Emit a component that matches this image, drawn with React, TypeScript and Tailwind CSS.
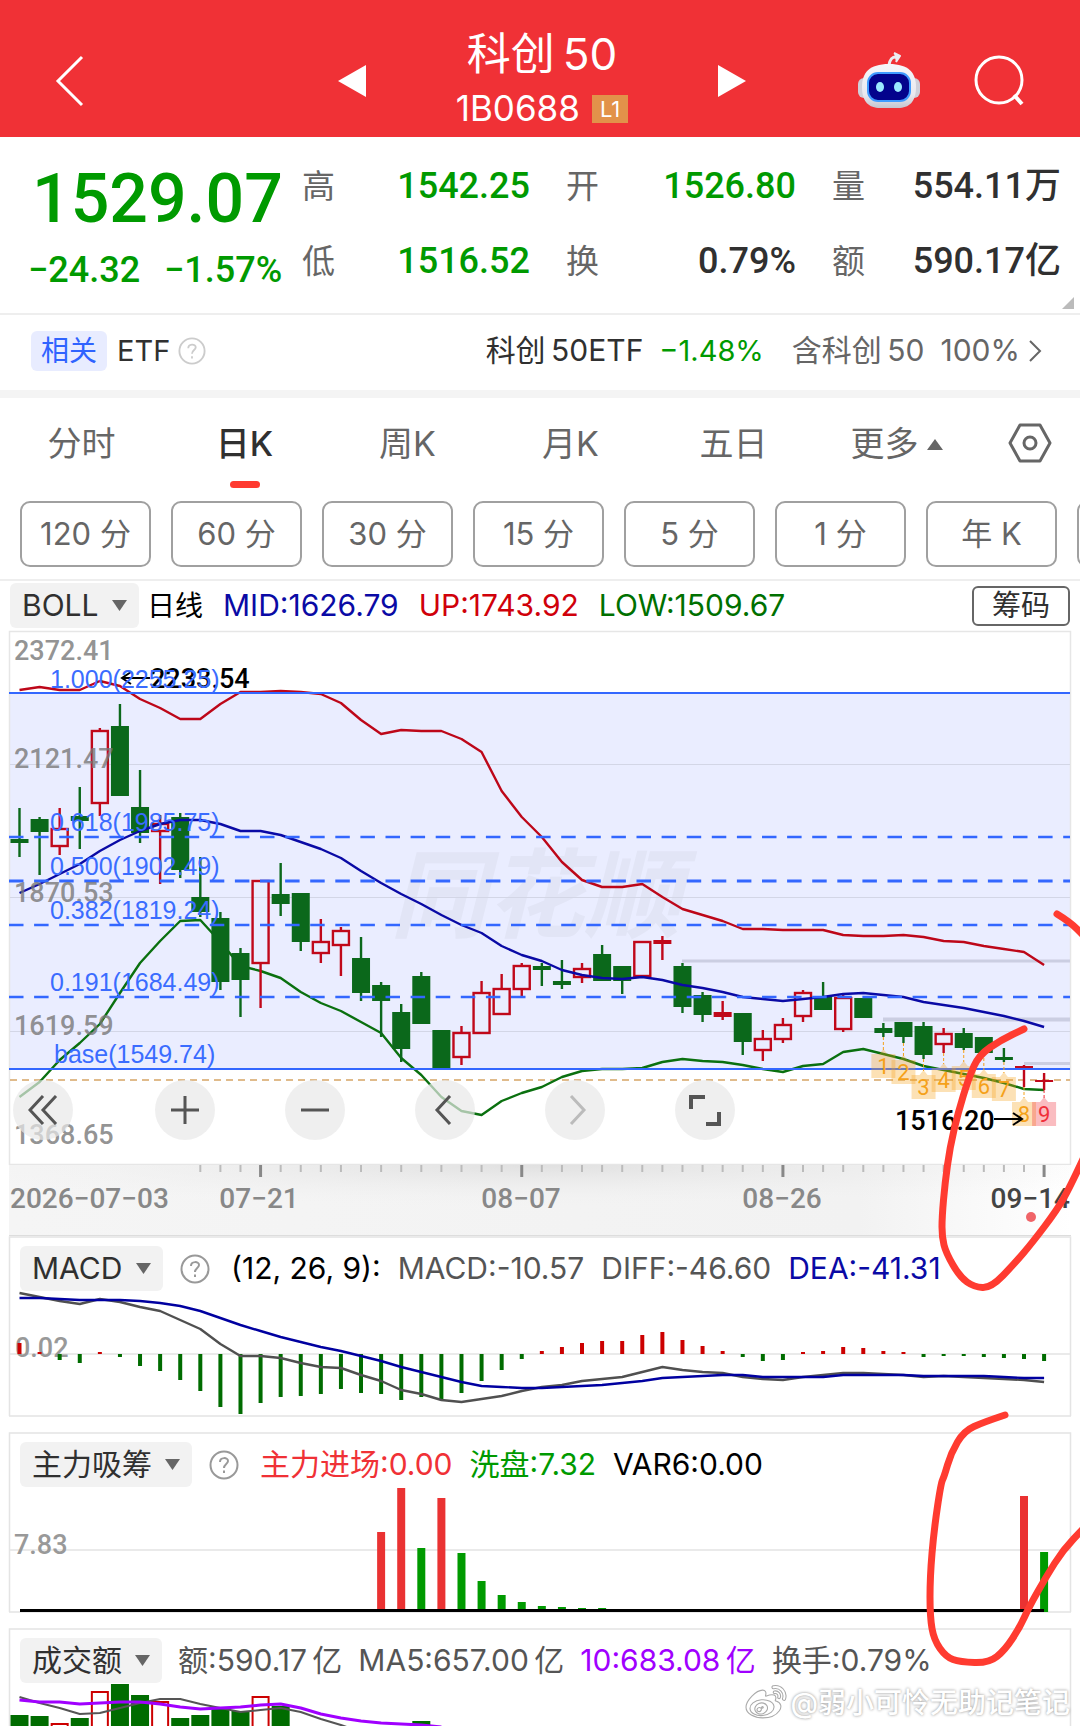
import { FaWeibo } from "react-icons/fa";

const latin = "font-['Inter','Noto_Sans_CJK_SC',sans-serif]";
const digits = "font-['Roboto','Noto_Sans_CJK_SC',sans-serif]";

const x = (i: number) => 19.5 + i * 20.09;
const line = (ys: number[]) => ys.map((y, i) => `${x(i)},${y}`).join(" ");

// direction, high, body top, body bottom, low
type Candle = ["r" | "g", number, number, number, number];

const candles: Candle[] = [
  ["g", 178, 209, 213, 227], ["g", 187, 189, 202, 245], ["r", 178, 198, 217, 225], ["g", 157, 186, 191, 219],
  ["r", 98, 100, 174, 186], ["g", 74, 96, 166, 166], ["g", 140, 177, 203, 213], ["r", 185, 193, 202, 254],
  ["g", 183, 187, 240, 248], ["g", 227, 267, 282, 287], ["g", 282, 288, 352, 360], ["g", 318, 323, 350, 387],
  ["r", 250, 250, 334, 378], ["g", 233, 264, 274, 286], ["g", 263, 263, 312, 321], ["r", 289, 311, 324, 333],
  ["r", 297, 300, 316, 346], ["g", 307, 328, 363, 371], ["g", 352, 355, 371, 407], ["g", 374, 382, 419, 432],
  ["g", 342, 346, 394, 394], ["g", 400, 400, 438, 438], ["r", 396, 402, 428, 435], ["r", 351, 362, 404, 404],
  ["r", 344, 358, 385, 385], ["r", 333, 335, 360, 367], ["g", 333, 336, 340, 356], ["g", 330, 351, 355, 359],
  ["r", 333, 338, 348, 353], ["g", 315, 324, 351, 351], ["g", 336, 336, 351, 364], ["r", 311, 311, 347, 348],
  ["r", 306, 310, 314, 330], ["g", 333, 336, 377, 383], ["g", 362, 365, 385, 392], ["r", 371, 382, 387, 390],
  ["g", 383, 383, 412, 425], ["r", 400, 408, 421, 431], ["r", 388, 394, 410, 413], ["r", 360, 362, 387, 392],
  ["g", 352, 367, 380, 380], ["r", 365, 367, 400, 402], ["g", 368, 368, 388, 388], ["g", 393, 398, 403, 407],
  ["g", 392, 392, 407, 413], ["g", 392, 396, 425, 429], ["r", 398, 403, 415, 423], ["g", 398, 403, 418, 420],
  ["g", 407, 407, 423, 423], ["g", 418, 427, 430, 432], ["r", 435, 436, 440, 457], ["r", 443, 450, 452, 460],
];

const upper = [
  60, 57, 60, 60, 51, 56, 69, 78, 89, 89, 74, 62, 62, 61, 62, 64, 73, 90, 104, 100, 101, 101, 109, 122, 161, 187,
  207, 232, 250, 257, 257, 254, 267, 279, 285, 291, 299, 299, 300, 300, 300, 305, 306, 306, 305, 307, 311, 312, 316,
  319, 322, 335,
];
const middle = [
  263, 254, 244, 234, 221, 210, 201, 194, 190, 190, 194, 201, 201, 205, 212, 219, 228, 241, 253, 264, 274, 285, 295,
  303, 316, 325, 331, 340, 345, 348, 349, 347, 350, 355, 358, 362, 367, 369, 371, 369, 367, 364, 363, 365, 367, 372,
  375, 378, 382, 386, 391, 397,
];
const lower = [
  467, 452, 430, 413, 394, 363, 333, 311, 291, 290, 312, 336, 341, 348, 362, 373, 381, 392, 403, 428, 445, 467, 481,
  485, 471, 463, 457, 447, 441, 439, 439, 438, 432, 429, 431, 432, 435, 439, 442, 436, 434, 422, 419, 424, 429, 436,
  440, 444, 448, 453, 459, 460,
];

const fibs = [
  { label: "1.000(2255.25)", x: 50, y: 58 },
  { label: "0.618(1985.75)", x: 50, y: 201 },
  { label: "0.500(1902.49)", x: 50, y: 245 },
  { label: "0.382(1819.24)", x: 50, y: 289 },
  { label: "0.191(1684.49)", x: 50, y: 361 },
  { label: "base(1549.74)", x: 54, y: 433 },
];

const prices = [
  { label: "2372.41", y: 30 },
  { label: "2121.47", y: 138 },
  { label: "1870.53", y: 272 },
  { label: "1619.59", y: 405 },
  { label: "1368.65", y: 514 },
];

const counts = [424, 430, 445, 438, 436, 444, 447, 472, 472];

const diff = [
  57, 61, 65, 68, 63, 66, 71, 75, 84, 93, 108, 120, 120, 122, 127, 131, 132, 139, 145, 154, 158, 164, 166, 163, 160,
  155, 151, 149, 145, 143, 141, 136, 131, 134, 136, 137, 141, 143, 144, 141, 139, 137, 137, 138, 139, 141, 140, 141,
  142, 143, 144, 146,
];
const dea = [
  62, 62, 63, 64, 64, 64, 65, 67, 70, 75, 82, 89, 95, 101, 106, 111, 115, 120, 125, 131, 136, 141, 146, 150, 151, 152,
  152, 151, 150, 149, 147, 145, 142, 141, 140, 139, 139, 141, 141, 141, 141, 139, 139, 139, 139, 140, 140, 140, 140,
  141, 142, 142,
];
const macd = [
  107, 116, 124, 127, 116, 121, 130, 135, 144, 155, 171, 178, 167, 161, 160, 158, 153, 157, 158, 164, 161, 163, 157,
  145, 134, 123, 115, 111, 107, 105, 105, 99, 96, 104, 110, 115, 121, 125, 124, 116, 115, 111, 112, 115, 116, 121, 120,
  120, 121, 122, 123, 125,
];

const force: [number, "r" | "g", number][] = [
  [18, "r", 100], [19, "r", 56], [20, "g", 116], [21, "r", 66], [22, "g", 121], [23, "g", 149], [24, "g", 163],
  [25, "g", 170], [26, "g", 174], [27, "g", 175], [28, "g", 176], [29, "g", 176], [50, "r", 64], [51, "g", 120],
];

const turnover: [number, "r" | "g", number][] = [
  [0, "g", 87], [1, "g", 88], [2, "r", 95], [3, "g", 90], [4, "r", 63], [5, "g", 56], [6, "g", 67], [7, "r", 73],
  [8, "g", 90], [9, "g", 87], [10, "g", 81], [11, "g", 83], [12, "r", 68], [13, "g", 78], [20, "g", 93],
];
const ma5 = [69, 75, 80, 86, 85, 80, 75, 71, 71, 76, 80, 84, 82, 80, 84, 91, 97, 104];
const ma10 = [72, 74, 74, 76, 75, 74, 74, 76, 79, 81, 80, 79, 77, 76, 80, 86, 90, 93, 95, 96, 97, 99];

function Header() {
  return (
    <header className="flex h-[137px] items-center bg-[#f03136] text-white">
      <button aria-label="返回" className="ml-[54px] mt-6">
        <svg width="32" height="52" viewBox="0 0 32 52" fill="none" stroke="currentColor" strokeWidth="3">
          <path d="M28 2 4 26l24 24" />
        </svg>
      </button>
      <div className="ml-auto flex items-center">
        <button aria-label="上一个" className="mt-6">
          <svg width="28" height="32" viewBox="0 0 28 32" fill="currentColor">
            <path d="M28 0v32L0 16z" />
          </svg>
        </button>
        <div className="flex w-[352px] flex-col items-center pt-7">
          <h1 className="text-[44px] leading-[52px]">科创&thinsp;50</h1>
          <div className="flex items-center gap-3 text-[35px] leading-[57px]">
            1B0688
            <span className="bg-[#e2924a] px-2 text-[22px] leading-7">L1</span>
          </div>
        </div>
        <button aria-label="下一个" className="mt-6">
          <svg width="28" height="32" viewBox="0 0 28 32" fill="currentColor">
            <path d="M0 0v32l28-16z" />
          </svg>
        </button>
      </div>
      <div className="ml-[112px] mr-14 mt-6 flex items-center gap-[54px]">
        <button aria-label="智能助手">
          <svg width="62" height="58" viewBox="0 0 62 58">
            <defs>
              <linearGradient id="shell" x2="0" y2="1">
                <stop offset="0" stopColor="#f6f6fa" />
                <stop offset="0.7" stopColor="#e9e9ef" />
                <stop offset="1" stopColor="#c4c5cf" />
              </linearGradient>
            </defs>
            <path d="M31 13c1-6 3-8 7-8" fill="none" stroke="#ececf2" strokeWidth="3" />
            <path d="m36 1 6 3-4 6" fill="#ececf2" stroke="#ececf2" strokeWidth="2" strokeLinejoin="round" />
            <rect x="0" y="26" width="62" height="20" rx="6" fill="#cfd0da" />
            <path d="M31 12c20 0 27 9 27 23 0 15-7 21-18 21H22C11 56 4 50 4 35 4 21 11 12 31 12z" fill="url(#shell)" />
            <rect x="10" y="21" width="42" height="28" rx="10" fill="#03038c" stroke="#3f9bff" strokeWidth="2" />
            <ellipse cx="22" cy="35" rx="4" ry="5" fill="#9be9ff" />
            <ellipse cx="40" cy="35" rx="4" ry="5" fill="#9be9ff" />
          </svg>
        </button>
        <button aria-label="搜索">
          <svg width="50" height="52" viewBox="0 0 50 52" fill="none" stroke="currentColor" strokeWidth="3">
            <circle cx="25" cy="25" r="23" />
            <path d="m40 40 8 9" strokeWidth="4" />
          </svg>
        </button>
      </div>
    </header>
  );
}

const quotes = [
  { label: "高", value: "1542.25", green: true },
  { label: "开", value: "1526.80", green: true },
  { label: "量", value: "554.11万", green: false },
  { label: "低", value: "1516.52", green: true },
  { label: "换", value: "0.79%", green: false },
  { label: "额", value: "590.17亿", green: false },
];

function Quote() {
  return (
    <section className={`${digits} relative flex h-[178px] border-b-2 border-[#eee] pr-[19px] font-medium`}>
      <div className="w-[302px] pl-7 text-[#009a00]">
        <div className="mt-5 pl-1 text-[68px] leading-[84px]">1529.07</div>
        <div className="flex gap-6 pt-2 text-[36px] leading-[42px]">
          <span>−24.32</span>
          <span>−1.57%</span>
        </div>
      </div>
      <dl className="grid flex-1 grid-cols-[228px_1fr_229px] content-start gap-x-9 pt-3 text-[36px] leading-[75px]">
        {quotes.map((q) => (
          <div key={q.label} className="flex justify-between">
            <dt className="text-[33px] font-normal text-[#666]">{q.label}</dt>
            <dd className={q.green ? "text-[#009a00]" : "text-[#303030]"}>{q.value}</dd>
          </div>
        ))}
      </dl>
      <svg className="absolute right-[6px] bottom-1 text-[#bbb]" width="12" height="12" fill="currentColor">
        <path d="M12 0v12H0z" />
      </svg>
    </section>
  );
}

function Help({ size, className }: { size: number; className: string }) {
  return (
    <button aria-label="说明" className={className}>
      <svg width={size} height={size} viewBox="0 0 30 30" fill="none" stroke="currentColor" strokeWidth="2">
        <circle cx="15" cy="15" r="13.5" />
        <path d="M11 12c0-5 8-5 8-1 0 3-4 3-4 7M15 20.5v2.5" />
      </svg>
    </button>
  );
}

function Related() {
  return (
    <section className="flex h-[83px] items-center border-b-8 border-[#f4f4f4] pr-[38px] pb-1 pl-[31px] text-[30px] text-[#303030]">
      <span className="rounded-md bg-[#e8ecff] px-[10px] text-[28px] leading-10 text-[#2f63ff]">相关</span>
      <span className="ml-[10px] text-[29px]">ETF</span>
      <Help size={28} className="ml-2 text-[#ccc]" />
      <a href="#etf" className="ml-auto flex gap-4">
        <span>科创&thinsp;50ETF</span>
        <span className="text-[29px] leading-[45px] text-[#009a00]">−1.48%</span>
      </a>
      <a href="#holding" className="ml-7 flex items-center gap-4 text-[#666]">
        <span>含科创&thinsp;50</span>
        <span>100%</span>
        <svg className="-ml-2" width="14" height="24" viewBox="0 0 14 24" fill="none" stroke="currentColor" strokeWidth="2">
          <path d="m2 2 10 10L2 22" />
        </svg>
      </a>
    </section>
  );
}

const tabs = ["分时", "日K", "周K", "月K", "五日", "更多"];
const periods = ["120 分", "60 分", "30 分", "15 分", "5 分", "1 分", "年 K"];

function Tabs() {
  return (
    <nav>
      <div className="flex h-[103px] pt-[21px]">
        <div className="grid flex-1 grid-cols-6 items-start">
          {tabs.map((tab) => (
            <button
              key={tab}
              className={
                tab === "日K"
                  ? "flex flex-col items-center text-[34px] leading-[50px] font-medium text-[#303030]"
                  : "flex items-center justify-center gap-2 text-[34px] leading-[50px] text-[#666]"
              }
            >
              {tab}
              {tab === "日K" && <span className="mt-3 h-[7px] w-[30px] rounded-full bg-[#ff3a30]" />}
              {tab === "更多" && (
                <svg width="16" height="11" viewBox="0 0 16 11" fill="#666">
                  <path d="m8 0 8 11H0z" />
                </svg>
              )}
            </button>
          ))}
        </div>
        <button aria-label="设置" className="mr-7 ml-[30px] self-start pt-1 text-[#666]">
          <svg width="44" height="40" viewBox="0 0 44 40" fill="none" stroke="currentColor" strokeWidth="3">
            <path d="M12 2h20l10 18-10 18H12L2 20z" strokeLinejoin="round" />
            <circle cx="22" cy="20" r="6" />
          </svg>
        </button>
      </div>
      <div className="flex h-20 gap-5 overflow-hidden border-b-2 border-[#eee] pl-5">
        {periods.map((p) => (
          <button
            key={p}
            className="h-[66px] w-[131px] shrink-0 rounded-[10px] border-2 border-[#a0a0a0] text-[31px] text-[#666]"
          >
            {p}
          </button>
        ))}
        <button aria-label="更多周期" className="h-[66px] w-[131px] shrink-0 rounded-[10px] border-2 border-[#a0a0a0]" />
      </div>
    </nav>
  );
}

function Picker({ value }: { value: string }) {
  return (
    <label className="relative flex items-center">
      <select
        aria-label="指标"
        className="h-[45px] appearance-none rounded-md bg-[#f2f2f2] pr-10 pl-3 text-[30px] text-[#303030]"
      >
        <option>{value}</option>
      </select>
      <svg className="pointer-events-none absolute right-3" width="15" height="11" viewBox="0 0 15 11" fill="#666">
        <path d="M0 0h15L7.5 11z" />
      </svg>
    </label>
  );
}

function BollBar() {
  return (
    <div className="flex h-[49px] items-center gap-5 px-[10px] text-[30px] text-black">
      <Picker value="BOLL" />
      <span className="-ml-3 text-[28px]">日线</span>
      <span className="text-[#0a0aa5]">MID:1626.79</span>
      <span className="text-[#d0000a]">UP:1743.92</span>
      <span className="text-[#007000]">LOW:1509.67</span>
      <button className="ml-auto h-10 rounded-md border-2 border-[#666] px-[18px] text-[29px] leading-9 text-[#303030]">
        筹码
      </button>
    </div>
  );
}

function KLine() {
  return (
    <svg viewBox="0 0 1080 535" className="block h-auto w-full" role="img">
      <rect x="10" y="63" width="1060" height="376" fill="#eaedff" />
      <text x="390" y="300" fontWeight="bold" fontSize="97" fontStyle="italic" fill="#e2e5f6" className={latin}>
        同花顺
      </text>
      <path d="M9.5 534.5V1.5h1061v533z" fill="none" stroke="#e6e6e6" strokeWidth="1.5" />
      <path d="M10 134.5h1060M10 267.5h1060M10 401.5h1060" stroke="#d3d6e6" />
      <path d="M682 331h388" stroke="#cbcee2" strokeWidth="3" />
      <path d="M883 389.5h187" stroke="#cbcee2" strokeWidth="4" />
      <path d="M1024 433.5h46" stroke="#cbcee2" strokeWidth="3" />
      <path d="M10 450h1060" stroke="#d6a566" strokeWidth="1.5" strokeDasharray="7 5" />
      <polyline points={line(lower)} fill="none" stroke="#0a700f" strokeWidth="2.4" strokeLinejoin="round" />
      {candles.map(([dir, high, top, bottom, low], i) => {
        const color = dir === "r" ? "#c0081a" : "#0b681b";
        const hollow = dir === "r" && bottom - top > 7;
        return (
          <g key={i} stroke={color} strokeWidth="2.4">
            <path d={`M${x(i)} ${high}V${top}M${x(i)} ${bottom}V${low}`} />
            {hollow ? (
              <rect x={x(i) - 8} y={top + 1} width="16" height={bottom - top - 2} fill="none" />
            ) : (
              <rect x={x(i) - 9} y={top} width="18" height={bottom - top} fill={color} stroke="none" />
            )}
          </g>
        );
      })}
      <g fill="none" strokeWidth="2.4" strokeLinejoin="round">
        <polyline points={line(upper)} stroke="#bd0719" />
        <polyline points={line(middle)} stroke="#0a0aa5" />
      </g>
      <g stroke="#3367ff" strokeWidth="2">
        <path d="M9 63h1061M9 439h1061" />
        <path d="M9 207h1061M9 295h1061M9 367h1061" strokeWidth="2.4" strokeDasharray="14.5 10.6" />
        <path d="M9 251h1061" strokeWidth="3" strokeDasharray="14.5 10.6" />
      </g>
      {counts.map((y, n) => {
        const i = n + 43;
        const last = n === 8;
        return (
          <g key={n} fill={last ? "#f0303a" : "#f5a11a"}>
            <path d={`M${x(i)} ${candles[i][4]}V${y - 4}`} stroke={last ? "#f0303a" : "#f5a11a"} strokeDasharray="3 2" />
            <path d={`M${x(i) - 12} ${y}h8l4-5 4 5h8v24h-24z`} opacity="0.32" />
            <text x={x(i)} y={y + 20} textAnchor="middle" fontSize="22" className={digits}>
              {n + 1}
            </text>
          </g>
        );
      })}
      <g fontSize="27" fontWeight="500" fill="#777" fillOpacity="0.8" className={digits}>
        {prices.map((p) => (
          <text key={p.label} x="14" y={p.y}>{p.label}</text>
        ))}
      </g>
      <g fontSize="27" fontWeight="500" className={digits}>
        <text x="150" y="58">2233.54</text>
        <text x="895" y="500">1516.20</text>
        <path d="M150 48h-28m9-6-9 6 9 6M994 489h28m-9-6 9 6-9 6" fill="none" stroke="#000" strokeWidth="2" />
      </g>
      <g fontSize="25" fill="#3a6cff" className="font-['Liberation_Sans',Arial,sans-serif]">
        {fibs.map((f) => (
          <text key={f.label} x={f.x} y={f.y}>{f.label}</text>
        ))}
      </g>
    </svg>
  );
}

const round = "flex size-[60px] items-center justify-center rounded-full bg-[#e8e8e8]/70 text-[#555]";

function ChartTools() {
  return (
    <div className="absolute bottom-[25px] left-[13px] flex gap-[70px]">
      <button aria-label="最早" className={`${round} mr-3`}>
        <svg width="30" height="30" viewBox="0 0 30 30" fill="none" stroke="currentColor" strokeWidth="3">
          <path d="M15 1 2 15l13 14M28 1 15 15l13 14" />
        </svg>
      </button>
      <button aria-label="放大" className={round}>
        <svg width="28" height="28" viewBox="0 0 28 28" stroke="currentColor" strokeWidth="3">
          <path d="M14 0v28M0 14h28" />
        </svg>
      </button>
      <button aria-label="缩小" className={round}>
        <svg width="28" height="28" viewBox="0 0 28 28" stroke="currentColor" strokeWidth="3">
          <path d="M0 14h28" />
        </svg>
      </button>
      <button aria-label="左移" className={round}>
        <svg width="30" height="30" viewBox="0 0 30 30" fill="none" stroke="currentColor" strokeWidth="3">
          <path d="M20 1 7 15l13 14" />
        </svg>
      </button>
      <button aria-label="右移" className={round}>
        <svg width="30" height="30" viewBox="0 0 30 30" fill="none" stroke="#bbb" strokeWidth="3">
          <path d="m11 1 13 14-13 14" />
        </svg>
      </button>
      <button aria-label="全屏" className={round}>
        <svg width="32" height="32" viewBox="0 0 32 32" fill="none" stroke="currentColor" strokeWidth="4">
          <path d="M2 15V3h14M30 18v12H17" />
        </svg>
      </button>
    </div>
  );
}

function DateAxis() {
  return (
    <svg viewBox="0 0 1080 71" className="block h-auto w-full" role="img">
      <defs>
        <linearGradient id="axis-x">
          <stop offset="0" stopColor="#f5f5f5" />
          <stop offset="0.8" stopColor="#f2f2f2" />
          <stop offset="1" stopColor="#ffffff" />
        </linearGradient>
        <radialGradient id="axis-top" cx="0.5" cy="0" r="0.6">
          <stop offset="0" stopColor="#e0e0e0" />
          <stop offset="1" stopColor="#f3f3f3" stopOpacity="0" />
        </radialGradient>
      </defs>
      <rect x="9" width="1062" height="71" fill="url(#axis-x)" />
      <rect x="9" width="1062" height="71" fill="url(#axis-top)" />
      <path d="M9 70.5h1062" stroke="#ddd" />
      {candles.map((_, i) =>
        i < 9 ? null : i % 13 === 12 ? (
          <path key={i} d={`M${x(i)} 0v12`} stroke="#888" strokeWidth="3" />
        ) : (
          <path key={i} d={`M${x(i)} 0v7`} stroke="#bbb" strokeWidth="2" />
        ),
      )}
      <g fontSize="28" fontWeight="500" fill="#888" className={digits}>
        <text x="10" y="43">2026−07−03</text>
        <text x="259" y="43" textAnchor="middle">07−21</text>
        <text x="521" y="43" textAnchor="middle">08−07</text>
        <text x="782" y="43" textAnchor="middle">08−26</text>
        <text x="1070" y="43" textAnchor="end" fill="#444">09−14</text>
      </g>
      <circle cx="1031" cy="52" r="5" fill="#f06468" />
    </svg>
  );
}

function Frame({ height }: { height: number }) {
  return <path d={`M9.5 ${height}V1h1061v${height - 1}`} fill="none" stroke="#e4e4e4" strokeWidth="1.5" />;
}

function Macd() {
  return (
    <section className="relative">
      <svg viewBox="0 0 1080 181" className="block h-auto w-full" role="img">
        <Frame height={180} />
        <path d="M9 180h1062M9 118h1062" stroke="#e4e4e4" strokeWidth="1.5" />
        <text x="15" y="121" fontSize="27" fontWeight="500" fill="#999" className={digits}>0.02</text>
        {macd.map((y, i) => (
          <path key={i} d={`M${x(i)} 118V${y}`} stroke={y < 118 ? "#cc0000" : "#006c00"} strokeWidth="4" />
        ))}
        <g fill="none" strokeWidth="2.4" strokeLinejoin="round">
          <polyline points={line(diff)} stroke="#505050" />
          <polyline points={line(dea)} stroke="#0000a0" />
        </g>
      </svg>
      <div className="absolute top-[10px] left-5 flex items-center gap-[17px] text-[30px] text-[#555]">
        <Picker value="MACD" />
        <Help size={30} className="mr-1 text-[#999]" />
        <span className="text-black">(12, 26, 9):</span>
        <span>MACD:-10.57</span>
        <span>DIFF:-46.60</span>
        <span className="text-[#0a0aa5]">DEA:-41.31</span>
      </div>
    </section>
  );
}

function MainForce() {
  return (
    <section className="relative mt-[15px]">
      <svg viewBox="0 0 1080 181" className="block h-auto w-full" role="img">
        <Frame height={180} />
        <path d="M9 180h1062M9 118h1062" stroke="#e4e4e4" strokeWidth="1.5" />
        <text x="14" y="122" fontSize="27" fontWeight="500" fill="#999" className={digits}>7.83</text>
        {force.map(([i, dir, y]) => (
          <path key={i} d={`M${x(i)} 180V${y}`} stroke={dir === "r" ? "#ea3232" : "#009a00"} strokeWidth="8" />
        ))}
        <path d="M20 178.5h1024" stroke="#000" strokeWidth="3" />
      </svg>
      <div className="absolute top-[10px] left-5 flex items-center gap-[17px] text-[30px] text-black">
        <Picker value="主力吸筹" />
        <Help size={30} className="mr-1 text-[#999]" />
        <span className="text-[#f03136]">主力进场:0.00</span>
        <span className="text-[#009a00]">洗盘:7.32</span>
        <span>VAR6:0.00</span>
      </div>
    </section>
  );
}

function Turnover() {
  return (
    <section className="relative mt-[15px]">
      <svg viewBox="0 0 1080 99" className="block h-auto w-full" role="img">
        <Frame height={99} />
        {turnover.map(([i, dir, y]) =>
          dir === "r" ? (
            <rect key={i} x={x(i) - 8} y={y + 1} width="16" height="50" fill="none" stroke="#cc0000" strokeWidth="2" />
          ) : (
            <rect key={i} x={x(i) - 9} y={y} width="18" height="50" fill="#006c00" />
          ),
        )}
        <g fill="none" strokeWidth="2" strokeLinejoin="round">
          <polyline points={line(ma5)} stroke="#555" />
          <polyline points={line(ma10)} stroke="#a000ff" strokeWidth="3" />
        </g>
      </svg>
      <div className="absolute top-[10px] left-5 flex items-center gap-4 text-[30px] text-[#555]">
        <Picker value="成交额" />
        <span>额:590.17&thinsp;亿</span>
        <span>MA5:657.00&thinsp;亿</span>
        <span className="text-[#a000ff]">10:683.08&thinsp;亿</span>
        <span>换手:0.79%</span>
      </div>
      <div className="absolute right-[10px] bottom-1 flex items-center gap-1 text-[28px] leading-9 font-medium text-white [text-shadow:0_0_3px_#888]">
        <FaWeibo className="size-10 overflow-visible" stroke="#aaa" strokeWidth="14" />
        @弱小可怜无助记笔记
      </div>
    </section>
  );
}

type Point = [number, number];

const strokes: Point[][] = [
  [[1057, 284], [1070, 292], [1084, 306]],
  [
    [1084, 527], [1070, 557], [1057, 580], [1032, 613], [1015, 633], [991, 658], [974, 657], [960, 647], [946, 623],
    [942, 607], [942, 587], [945, 553], [950, 517], [958, 483], [969, 447], [979, 425], [1001, 410], [1024, 399],
  ],
  [
    [1005, 785], [984, 792], [964, 801], [951, 823], [944, 847], [941, 853], [934, 900], [930, 947], [930, 987],
    [934, 1010], [946, 1027], [960, 1032], [989, 1033], [1005, 1020], [1020, 997], [1029, 977], [1046, 947],
    [1063, 920], [1084, 898],
  ],
];

// rounds the corners by curving through the midpoints
function smooth(points: Point[]) {
  const [first, ...rest] = points;
  const end = rest[rest.length - 1];
  const curves = rest.slice(0, -1).map(([px, py], i) => {
    const [nx, ny] = rest[i + 1];
    return `Q${px} ${py} ${(px + nx) / 2} ${(py + ny) / 2}`;
  });
  return `M${first.join(" ")}${curves.join("")}L${end.join(" ")}`;
}

function Marks() {
  return (
    <svg
      viewBox="0 0 1080 1096"
      className="pointer-events-none absolute top-0 left-0 h-auto w-full"
      fill="none"
      stroke="#ff3b30"
      strokeWidth="7"
      strokeLinecap="round"
      strokeLinejoin="round"
    >
      {strokes.map((points, i) => (
        <path key={i} d={smooth(points)} />
      ))}
    </svg>
  );
}

export default function App() {
  return (
    <main className={`${latin} w-full overflow-hidden bg-white`}>
      <Header />
      <Quote />
      <Related />
      <Tabs />
      <BollBar />
      <div className="relative">
        <div className="relative">
          <KLine />
          <ChartTools />
        </div>
        <DateAxis />
        <Macd />
        <MainForce />
        <Turnover />
        <Marks />
      </div>
    </main>
  );
}
